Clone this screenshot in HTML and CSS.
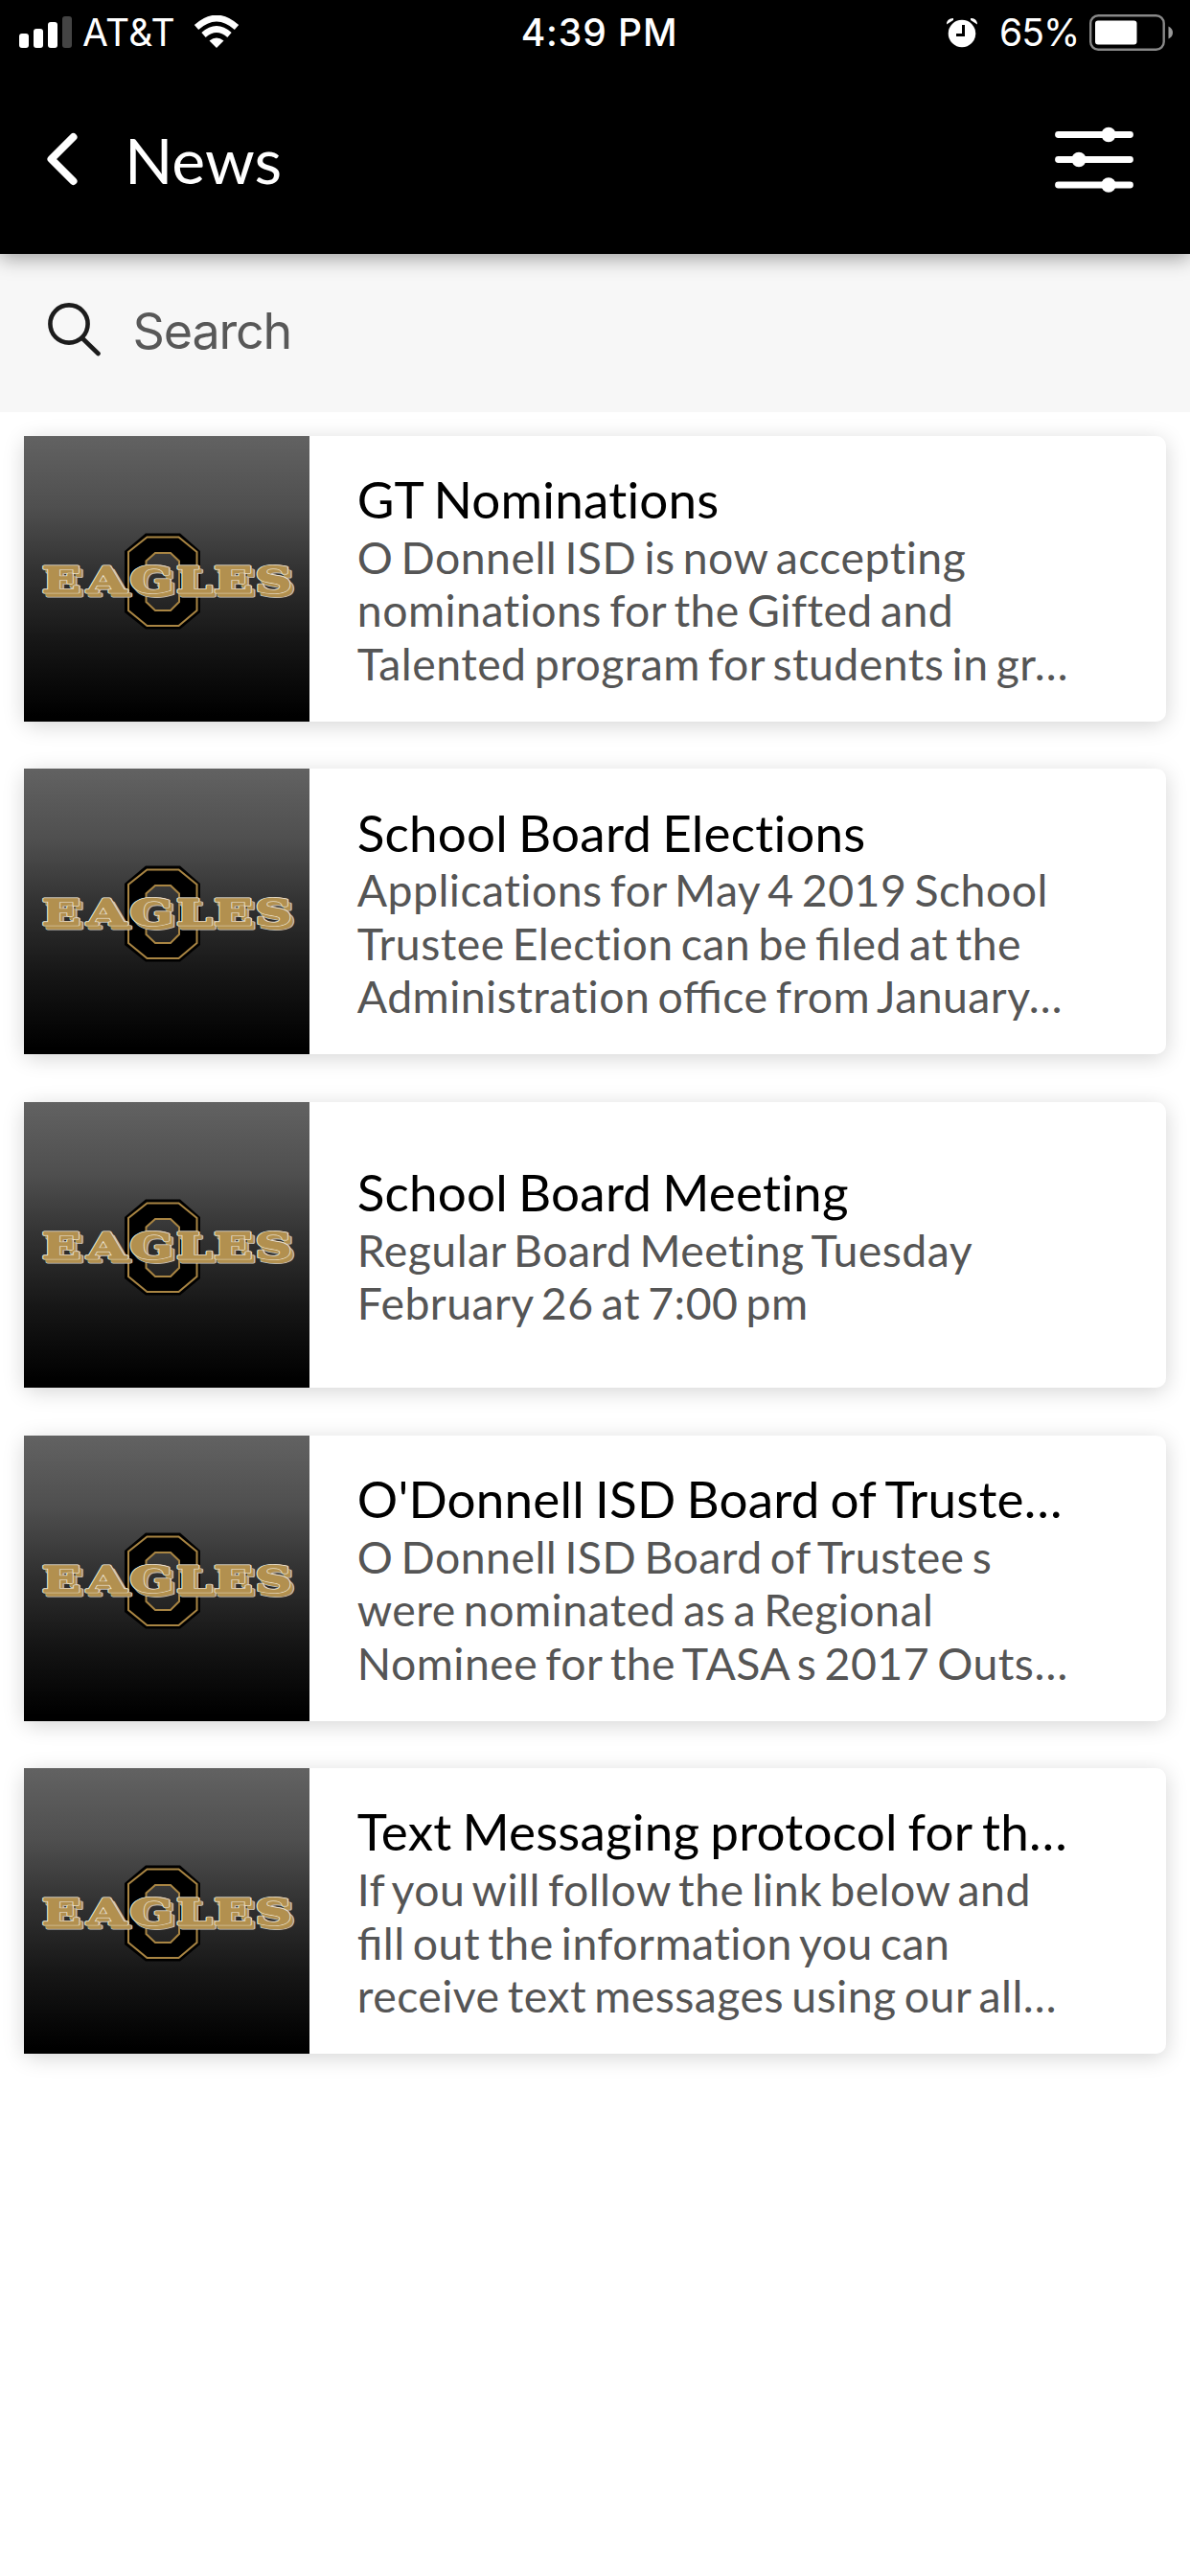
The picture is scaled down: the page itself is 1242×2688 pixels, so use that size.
FILE: index.html
```
<!DOCTYPE html>
<html lang="en">
<head>
<meta charset="utf-8">
<title>News</title>
<link rel="stylesheet" href="styles.css">
</head>
<body>
<svg width="0" height="0" class="defs" aria-hidden="true">
  <defs>
    <symbol id="logo" viewBox="0 0 298 298">
      <path class="oct-back" fill-rule="evenodd" d="M127 101.500H163L184 120V184L163 201.500H127L105 184V120ZM137 121L127 130V172L137 182H153L162 172V130L153 121Z"/>
      <path class="oct-line" d="M128.500 105.500H161.500L180.500 121V182L161.500 198H128.500L109 182V121Z"/>
      <path class="oct-line" d="M137 122H153L162 130.500V173L153 182H137L127.500 173V130.500Z"/>
      <g transform="translate(3.500 4) scale(1.4 1)"><text class="word edge" y="163.500" x="13.400 47 78.900 113.600 141.400 172.300">EAGLES</text></g>
      <g transform="scale(1.4 1)"><text class="word edge" y="163.500" x="13.400 47 78.900 113.600 141.400 172.300">EAGLES</text></g>
      <g transform="translate(3.500 4) scale(1.4 1)"><text class="word face" y="163.500" x="13.400 47 78.900 113.600 141.400 172.300">EAGLES</text></g>
      <g transform="translate(2 2.400) scale(1.4 1)"><text class="word face" y="163.500" x="13.400 47 78.900 113.600 141.400 172.300">EAGLES</text></g>
      <g transform="scale(1.4 1)"><text class="word rim" y="163.500" x="13.400 47 78.900 113.600 141.400 172.300">EAGLES</text></g>
      <g transform="scale(1.4 1)"><text class="word face" y="163.500" x="13.400 47 78.900 113.600 141.400 172.300">EAGLES</text></g>
    </symbol>
  </defs>
</svg>

<header class="top">
  <div class="status">
    <div class="status-left">
      <svg class="signal" width="56" height="36" viewBox="0 0 56 36"><rect x="0" y="19" width="10" height="15" rx="3"/><rect x="15" y="14" width="10" height="20" rx="3"/><rect x="30" y="7" width="10" height="27" rx="3"/><rect class="dim" x="45" y="1" width="10" height="33" rx="3"/></svg>
      <span class="carrier">AT&amp;T</span>
      <svg class="wifi" width="48" height="36" viewBox="0 0 48 36"><path d="M3 12.500Q24 -6.500 45 12.500" /><path d="M10.500 20.500Q24 8.500 37.500 20.500"/><path class="fill" d="M16.500 26.500Q24 20.500 31.500 26.500L24 34Z"/></svg>
    </div>
    <span class="clock">4:39 PM</span>
    <div class="status-right">
      <svg class="alarm" width="34" height="32" viewBox="0 0 34 32"><circle cx="17" cy="17" r="14.300"/><path class="bell" d="M1 7.500Q1 1 8 1L8 3Z"/><path class="bell" d="M33 7.500Q33 1 26 1L26 3Z"/><path d="M18.500 8V18.500H11" class="hands"/></svg>
      <span class="percent">65%</span>
      <svg class="battery" width="88" height="38" viewBox="0 0 88 38"><rect class="case" x="1.200" y="1.200" width="76.500" height="35.600" rx="8"/><rect x="6" y="6.500" width="43.500" height="25" rx="3"/><path class="tip" d="M82.500 12.500Q87 14.500 87 19T82.500 25.500Z"/></svg>
    </div>
  </div>
  <div class="bar">
    <svg class="back" width="32" height="56" viewBox="0 0 32 56"><path d="M27.500 5L4.500 28L27.500 51"/></svg>
    <h1>News</h1>
    <svg class="filters" width="82" height="70" viewBox="0 0 82 70"><path d="M3.500 8.500H78.500M3.500 34.500H78.500M3.500 61H78.500"/><circle cx="56" cy="8.500" r="7.700"/><circle cx="25" cy="34.500" r="7.700"/><circle cx="56" cy="61" r="7.700"/></svg>
  </div>
</header>

<div class="search">
  <svg width="56" height="56" viewBox="0 0 56 56"><circle cx="22" cy="22" r="19.600"/><path d="M36 37L52.500 53"/></svg>
  <span>Search</span>
</div>

<main class="list">
  <article class="card">
    <div class="thumb"><svg viewBox="0 0 298 298"><use href="#logo"/></svg></div>
    <div class="copy"><h2>GT Nominations</h2><p>O Donnell ISD is now accepting<br>nominations for the Gifted and<br>Talented program for students in gr…</p></div>
  </article>
  <article class="card">
    <div class="thumb"><svg viewBox="0 0 298 298"><use href="#logo"/></svg></div>
    <div class="copy"><h2>School Board Elections</h2><p>Applications for May 4 2019 School<br>Trustee Election can be <span class="lig">filed</span> at the<br>Administration <span class="lig">office</span> from January…</p></div>
  </article>
  <article class="card">
    <div class="thumb"><svg viewBox="0 0 298 298"><use href="#logo"/></svg></div>
    <div class="copy"><h2>School Board Meeting</h2><p>Regular Board Meeting Tuesday<br>February 26 at 7:00 pm</p></div>
  </article>
  <article class="card">
    <div class="thumb"><svg viewBox="0 0 298 298"><use href="#logo"/></svg></div>
    <div class="copy"><h2>O'Donnell ISD Board of Truste…</h2><p>O Donnell ISD Board of Trustee s<br>were nominated as a Regional<br>Nominee for the TASA s 2017 Outs…</p></div>
  </article>
  <article class="card">
    <div class="thumb"><svg viewBox="0 0 298 298"><use href="#logo"/></svg></div>
    <div class="copy"><h2>Text Messaging protocol for th…</h2><p>If you will follow the link below and<br><span class="lig">fill</span> out the information you can<br>receive text messages using our all…</p></div>
  </article>
</main>
</body>
</html>
```
FILE: styles.css
```
* { box-sizing: border-box; }
body {
  margin: 0;
  min-height: 2688px;
  background: #fff;
  font-family: Lato, "Liberation Sans", sans-serif;
}
svg { display: block; flex: none; }
.defs { position: absolute; }
h1, h2, p { margin: 0; font-weight: 400; white-space: nowrap; font-variant-ligatures: none; }
.lig { font-variant-ligatures: normal; font-feature-settings: "liga" 1; }

.top {
  position: relative;
  height: 265px;
  background: #000;
  color: #fff;
  box-shadow: 0 4px 20px rgba(0, 0, 0, .38);
}
.status {
  display: grid;
  grid-template-columns: 1fr auto 1fr;
  align-items: center;
  height: 68px;
  padding: 0 17px 0 20px;
  font: 400 39px/68px Inter, sans-serif;
  fill: #fff;
}
.status-left, .status-right { display: flex; align-items: center; }
.status-right { justify-content: flex-end; }
.dim { fill: #444; }
.signal { margin-right: 10px; }
.carrier { letter-spacing: .4px; }
.wifi { margin-left: 19px; fill: none; stroke: #fff; stroke-width: 6.500; }
.wifi .fill { fill: #fff; stroke: none; }
.clock { font-weight: 500; letter-spacing: .9px; padding-left: 6px; }
.hands { fill: none; stroke: #000; stroke-width: 3; }
.percent { margin: 0 10.500px 0 22px; letter-spacing: -.9px; }
.case { fill: none; stroke: #888; stroke-width: 2.400; }
.tip { fill: #999; }

.bar {
  display: flex;
  align-items: center;
  height: 197px;
  padding: 0 59px 0 49px;
}
.back { fill: none; stroke: #fff; stroke-width: 8; stroke-linecap: round; stroke-linejoin: round; margin-bottom: 1px; }
.bar h1 { flex: 1; margin-left: 49px; font-size: 66px; line-height: 80px; }
.filters { fill: #fff; stroke: #fff; stroke-width: 6.800; stroke-linecap: round; }
.filters circle { stroke: none; }

.search {
  display: flex;
  align-items: center;
  gap: 33px;
  height: 165px;
  padding: 0 48px 4px 49.600px;
  background: #f7f7f7;
  color: #585858;
  font: 400 52px/64px Inter, sans-serif;
  letter-spacing: -1.200px;
}
.search svg { fill: none; stroke: #1c1c1c; stroke-width: 4.600; stroke-linecap: round; margin-bottom: 3px; }

.list {
  display: flex;
  flex-direction: column;
  gap: 49.600px;
  padding: 24.800px 24.800px 0;
}
.card {
  display: flex;
  height: 298px;
  background: #fff;
  border-radius: 10px;
  box-shadow: 0 4px 22px rgba(0, 0, 0, .17);
}
.thumb {
  width: 298px;
  flex: none;
  background: linear-gradient(#626262, #4f4f4f 25%, #313131 48%, #161616 72%, #000 98%);
}
.oct-back { fill: #000; }
.oct-line { fill: none; stroke: #a98543; stroke-width: 2; }
.word {
  font: 700 38px "DejaVu Serif", serif;
  fill: #b2904f;
  stroke-linejoin: round;
}
.edge { stroke: #c4c2be; stroke-width: 3; }
.rim { stroke: #eee4d0; stroke-width: 2.600; }
.face { stroke: #b2904f; stroke-width: 1.300; }
.copy {
  display: flex;
  flex-direction: column;
  justify-content: center;
  padding: 1.600px 0 0 50px;
}
.copy h2 { font-size: 53px; line-height: 63.400px; letter-spacing: .2px; word-spacing: -2.800px; color: #000; }
.copy p { margin-top: 1.400px; font-size: 46.400px; line-height: 55.500px; letter-spacing: .45px; word-spacing: -4.100px; color: #555; }
```
